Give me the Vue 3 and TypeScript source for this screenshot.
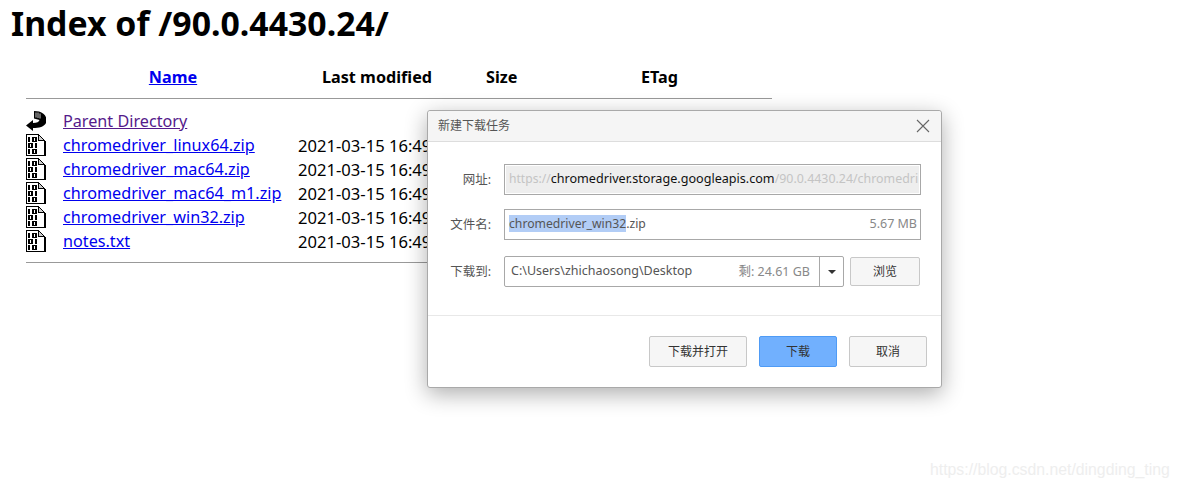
<script setup lang="ts">
interface Row { name: string; date: string; parent?: boolean }
const rows: Row[] = [
  { name: 'Parent Directory', date: '', parent: true },
  { name: 'chromedriver_linux64.zip', date: '2021-03-15 16:49' },
  { name: 'chromedriver_mac64.zip', date: '2021-03-15 16:49' },
  { name: 'chromedriver_mac64_m1.zip', date: '2021-03-15 16:49' },
  { name: 'chromedriver_win32.zip', date: '2021-03-15 16:49' },
  { name: 'notes.txt', date: '2021-03-15 16:49' },
]
</script>

<template>
  <div class="page">
    <h1 class="title">Index of /90.0.4430.24/</h1>
    <div class="head">
      <a class="h-name" href="#">Name</a>
      <span class="h-mod">Last modified</span>
      <span class="h-size">Size</span>
      <span class="h-etag">ETag</span>
    </div>
    <div class="rule first"></div>
    <div class="list">
      <div v-for="r in rows" :key="r.name" class="row">
        <svg v-if="r.parent" class="icon" viewBox="0 0 20 22" width="20" height="22">
          <path d="M0 15.5 L7 10 L7 13 C11 13 13 12 13.5 10 L8 8.5 L8 1 L13 1.5 C18 3 21 6.5 20.5 11 C20 16 14 18 7 18 L7 21 Z" fill="#000" />
          <path d="M10 2.5 V7.5 M12 2.5 V8 M14 3.5 V8.5" stroke="#fff" stroke-width="0.8" />
        </svg>
        <svg v-else class="icon" viewBox="0 0 20 22" width="20" height="22" shape-rendering="crispEdges">
          <path d="M0.5 0.5 H12 L18.5 6.5 V21.5 H0.5 Z" fill="#fff" stroke="#000" stroke-width="1" />
          <path d="M12 0.5 V6.5 H18.5" fill="#ccc" stroke="#000" stroke-width="1" />
          <path d="M19.5 7 V22 H2" fill="none" stroke="#000" stroke-width="1" />
          <g fill="#000">
            <rect x="2" y="3" width="2" height="5" />
            <path fill-rule="evenodd" d="M6 3 H11 V8 H6 Z M8 4 V7 H9 V4 Z" />
            <path fill-rule="evenodd" d="M2 9 H7 V14 H2 Z M4 10 V13 H5 V10 Z" />
            <rect x="9" y="9" width="2" height="5" />
            <rect x="2" y="15" width="2" height="5" />
            <path fill-rule="evenodd" d="M6 15 H11 V20 H6 Z M8 16 V19 H9 V16 Z" />
          </g>
        </svg>
        <a class="link" :class="{ visited: r.parent }" href="#">{{ r.name }}</a>
        <span class="date">{{ r.date }}</span>
      </div>
    </div>
    <div class="rule last"></div>

    <section class="dialog">
      <header class="d-title">
        <span class="d-title-text">新建下载任务</span>
        <svg class="close" viewBox="0 0 14 14" width="14" height="14">
          <path d="M1 1 L13 13 M13 1 L1 13" stroke="#666" stroke-width="1.1" fill="none" />
        </svg>
      </header>
      <div class="d-body">
        <div class="field url-field">
          <label>网址:</label>
          <div class="box url">
            <div class="url-inner"><span class="dim proto">https://</span><span class="strong">chromedriver.storage.googleapis.com</span><span class="dim rest">/90.0.4430.24/chromedri</span></div>
          </div>
        </div>
        <div class="field name-field">
          <label>文件名:</label>
          <div class="box name">
            <span class="up"><span class="sel">chromedriver_win32</span>.zip</span>
            <span class="meta up">5.67 MB</span>
          </div>
        </div>
        <div class="field path-field">
          <label>下载到:</label>
          <div class="box path">
            <span class="path-text up">C:\Users\zhichaosong\Desktop</span>
            <span class="meta up">剩: 24.61 GB</span>
            <span class="drop"><i class="caret"></i></span>
          </div>
          <button class="btn browse">浏览</button>
        </div>
      </div>
      <footer class="d-foot">
        <button class="btn act w98">下载并打开</button>
        <button class="btn act primary">下载</button>
        <button class="btn act">取消</button>
      </footer>
    </section>

    <div class="mark">https://blog.csdn.net/dingding_ting</div>
  </div>
</template>

<style scoped>
.page {
  position: relative;
  width: 1180px;
  height: 487px;
  overflow: hidden;
  background: #fff;
  color: #000;
  font-family: "Noto Sans", "Noto Sans CJK SC", sans-serif;
}
.title {
  margin: 0;
  padding: 1px 0 2px 11px;
  font-size: 33.8px;
  line-height: 44px;
  font-weight: 700;
}
.head {
  display: grid;
  grid-template-columns: 294px 166px 155px auto;
  padding: 18px 0 0 26px;
  height: 24px;
  font-size: 16.2px;
  line-height: 24px;
  font-weight: 700;
}
.h-name { color: #00e; text-align: center; }
.h-mod { padding-left: 2px; }
.rule { margin-left: 26px; width: 746px; height: 1px; background: #999; }
.rule.first { margin-top: 9px; }
.rule.last { margin-top: 9px; }
.list { padding-top: 10px; }
.row {
  display: flex;
  align-items: center;
  height: 24px;
  padding-left: 26px;
  font-size: 16.2px;
}
.icon { flex: none; width: 20px; height: 22px; }
.link { width: 235px; margin-left: 17px; color: #00e; white-space: nowrap; }
.link.visited { color: #551a8b; }
.date { white-space: nowrap; font-size: 16.6px; }
.dialog {
  position: absolute;
  left: 427px;
  top: 110px;
  width: 515px;
  height: 278px;
  box-sizing: border-box;
  display: flex;
  flex-direction: column;
  background: #fff;
  border: 1px solid #a9a9a9;
  border-radius: 3px;
  box-shadow: 0 6px 22px rgba(0, 0, 0, 0.32);
  font-size: 12px;
  color: #444;
}
.d-title {
  flex: none;
  height: 30px;
  display: flex;
  align-items: center;
  justify-content: space-between;
  padding: 0 11px 0 10px;
  background: #f5f5f5;
  border-bottom: 1px solid #ddd;
  border-radius: 3px 3px 0 0;
  color: #555;
}
.d-title-text { margin-bottom: 3px; }
.close { display: block; }
.d-body {
  flex: 1;
  padding-top: 22px;
  border-bottom: 1px solid #e8e8e8;
}
.field { display: flex; align-items: center; height: 31px; }
.field label {
  width: 63px;
  padding-right: 13px;
  margin-bottom: 3px;
  font-size: 12.5px;
  text-align: right;
  color: #555;
}
.name-field { margin-top: 14px; }
.path-field { margin-top: 16px; }
.box {
  box-sizing: border-box;
  border: 1px solid #a8a8a8;
  height: 100%;
  font-size: 12.2px;
}
.up { margin-bottom: 2px; }
.url { width: 417px; padding: 1px; }
.url-inner {
  height: 100%;
  background: #eee;
  padding-left: 3px;
  line-height: 25px;
  overflow: hidden;
  white-space: nowrap;
  font-size: 12.6px;
}
.dim { color: #c4c4c4; }
.proto { font-size: 12.1px; }
.rest { font-size: 12.4px; }
.strong { color: #111; }
.name {
  width: 417px;
  display: flex;
  align-items: center;
  justify-content: space-between;
  padding: 0 3px 0 4px;
  color: #555;
}
.sel { background: #b2cdf6; display: inline-block; line-height: 17px; }
.meta { color: #888; font-size: 12.5px; }
.path {
  width: 340px;
  display: flex;
  align-items: center;
  border-radius: 2px;
  padding-left: 6px;
  font-size: 12.5px;
  color: #555;
}
.path-text { flex: 1; }
.path .meta { font-size: 12.5px; margin-right: 9px; }
.drop {
  box-sizing: border-box;
  width: 24px;
  height: 100%;
  border-left: 1px solid #a8a8a8;
  display: flex;
  align-items: center;
  justify-content: center;
}
.caret {
  width: 0;
  height: 0;
  border-left: 4px solid transparent;
  border-right: 4px solid transparent;
  border-top: 4px solid #333;
}
.btn {
  box-sizing: border-box;
  padding: 0 0 2px;
  background: #f6f6f6;
  border: 1px solid #c8c8c8;
  border-radius: 2px;
  font: inherit;
  color: #333;
}
.browse { width: 70px; height: 29px; margin-left: 6px; }
.d-foot {
  flex: none;
  height: 71px;
  display: flex;
  justify-content: flex-end;
  gap: 12px;
  padding: 20px 14px 0 0;
  box-sizing: border-box;
}
.act { width: 78px; height: 31px; }
.w98 { width: 98px; }
.primary { background: #71b0fe; border-color: #4f9bf5; }
.mark {
  position: absolute;
  left: 930px;
  top: 460px;
  font-family: "Liberation Sans", sans-serif;
  font-size: 15.8px;
  line-height: 20px;
  color: #eeeeee;
  white-space: nowrap;
}
</style>
